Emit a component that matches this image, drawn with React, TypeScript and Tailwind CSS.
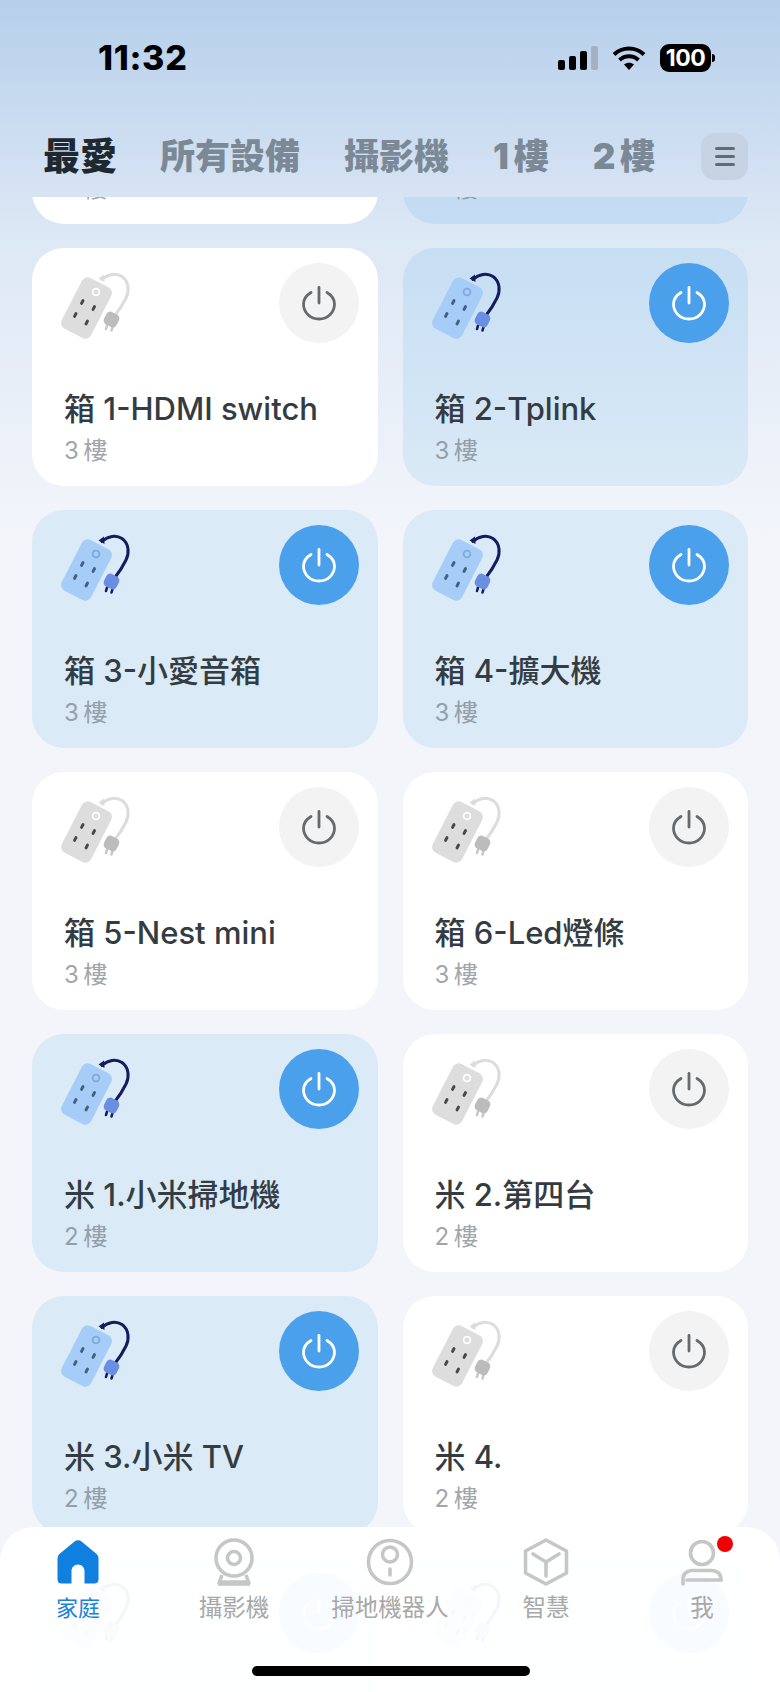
type Device = { name: string; floor: string; on: boolean };

const DEVICES: Device[] = [
  { name: "", floor: "3 樓", on: false },
  { name: "", floor: "3 樓", on: true },
  { name: "箱 1-HDMI switch", floor: "3 樓", on: false },
  { name: "箱 2-Tplink", floor: "3 樓", on: true },
  { name: "箱 3-小愛音箱", floor: "3 樓", on: true },
  { name: "箱 4-擴大機", floor: "3 樓", on: true },
  { name: "箱 5-Nest mini", floor: "3 樓", on: false },
  { name: "箱 6-Led燈條", floor: "3 樓", on: false },
  { name: "米 1.小米掃地機", floor: "2 樓", on: true },
  { name: "米 2.第四台", floor: "2 樓", on: false },
  { name: "米 3.小米 TV", floor: "2 樓", on: true },
  { name: "米 4.", floor: "2 樓", on: false },
  { name: "", floor: "", on: true },
  { name: "", floor: "", on: true },
];

const TABS = ["所有設備", "攝影機", "1\u2009樓", "2\u2009樓"];

function StripIcon({ on }: { on: boolean }) {
  const body = on ? "#a5cdf8" : "#dddddd";
  const cable = on ? "#141c5e" : "#dcdcdc";
  const plug = on ? "#6a8fe2" : "#bcbcbc";
  const prong = on ? "#141c5e" : "#c8c8c8";
  const socket = on ? "#41607f" : "#474747";
  const ring = on ? "#7fa9d8" : "#ffffff";
  return (
    <svg width="72" height="70" viewBox="10 10 72 70" fill="none" className="shrink-0">
      <path d="M52 19.5C58 14 66 12.5 72 16.5C79 21.5 79.5 31 76 38C73 44 70 49 66 54" stroke={cable} strokeWidth="3" strokeLinecap="round" />
      <path d="M48.5 18.5L54 14.5L54.5 22Z" fill={cable} />
      <rect x="20" y="19.5" width="33" height="57" rx="6.5" transform="rotate(27 36.5 48)" fill={body} />
      <circle cx="46" cy="32" r="3.4" stroke={ring} strokeWidth="1.8" fill={on ? "none" : "#dddddd"} />
      <g stroke={socket} strokeWidth="2.8" strokeLinecap="round">
        <path d="M31.5 43.5L33 40.5" />
        <path d="M43 49.5L44.5 46.5" />
        <path d="M24.5 56.5L26 53.5" />
        <path d="M36 64L37.5 61" />
      </g>
      <g stroke={prong} strokeWidth="2.6" strokeLinecap="round">
        <path d="M57 65.5L56 69" />
        <path d="M62.5 67L61.5 70.5" />
      </g>
      <rect x="54.5" y="52.5" width="14" height="14" rx="4.5" transform="rotate(27 61.5 59.5)" fill={plug} />
    </svg>
  );
}

function PowerIcon({ on }: { on: boolean }) {
  return (
    <svg width="36" height="36" viewBox="0 0 36 36" fill="none" stroke={on ? "#ffffff" : "#666a6d"} strokeWidth="2.8" strokeLinecap="round">
      <path d="M18 2.5V18" />
      <path d="M10 7.5C5.5 10.2 2.5 14.6 2.5 19C2.5 27.6 9.4 34 18 34C26.6 34 33.5 27.6 33.5 19C33.5 14.6 30.5 10.2 26 7.5" />
    </svg>
  );
}

function DeviceCard({ device }: { device: Device }) {
  return (
    <div
      className={
        device.on
          ? "flex h-[238px] flex-col rounded-[32px] bg-linear-to-b from-[#c3dcf3] from-[12%] to-[#daeaf6] to-[29%] bg-fixed"
          : "flex h-[238px] flex-col rounded-[32px] bg-white"
      }
    >
      <div className="flex items-start justify-between pt-[15px] pr-[19px] pl-[28px]">
        <div className="mt-[7px]">
          <StripIcon on={device.on} />
        </div>
        <div
          className={
            device.on
              ? "flex h-[80px] w-[80px] items-center justify-center rounded-full bg-[#4ba0ec]"
              : "flex h-[80px] w-[80px] items-center justify-center rounded-full bg-[#f3f3f3]"
          }
        >
          <PowerIcon on={device.on} />
        </div>
      </div>
      <div className="mt-auto pb-[19px] pl-[32px]">
        <div className="min-h-[40px] text-[31px] leading-[40px] font-medium text-[#343c43]">{device.name}</div>
        <div
          className={
            device.on
              ? "mt-[6px] text-[24px] leading-[32px] [word-spacing:-2px] text-[#939fa9]"
              : "mt-[6px] text-[24px] leading-[32px] [word-spacing:-2px] text-[#a2a6aa]"
          }
        >
          {device.floor}
        </div>
      </div>
    </div>
  );
}

function StatusIcons() {
  return (
    <div className="flex items-center">
      <div className="flex items-end gap-[4px]">
        <span className="h-[10px] w-[7px] rounded-[2px] bg-black" />
        <span className="h-[14px] w-[7px] rounded-[2px] bg-black" />
        <span className="h-[19px] w-[7px] rounded-[2px] bg-black" />
        <span className="h-[24px] w-[7px] rounded-[2px] bg-[#a3b1c2]" />
      </div>
      <svg width="34" height="24" viewBox="0 0 34 24" className="ml-[14px]" fill="none" stroke="#000" strokeWidth="4">
        <path d="M2 8.5C10.5 0.5 23.5 0.5 32 8.5" />
        <path d="M7.5 14C13 9 21 9 26.5 14" />
        <path d="M12 18.5L17 24L22 18.5C19 16 15 16 12 18.5Z" fill="#000" stroke="none" />
      </svg>
      <div className="ml-[14px] flex items-center">
        <div className="flex h-[28px] w-[51px] items-center justify-center rounded-[9px] bg-black text-[23px] leading-none font-bold tracking-[-0.5px] text-white">
          100
        </div>
        <span className="ml-[1px] h-[8px] w-[3px] rounded-r-full bg-black" />
      </div>
    </div>
  );
}

function HomeIcon() {
  return (
    <svg width="42" height="44" viewBox="0 0 42 44">
      <path
        fillRule="evenodd"
        d="M17.5 1.5C19.5 -0.2 22.5 -0.2 24.5 1.5L39 13.5C40.6 14.8 41.5 16.6 41.5 18.6V39.5C41.5 42 39.8 43.5 37.5 43.5H27.5V31C27.5 27.4 24.6 24.5 21 24.5C17.4 24.5 14.5 27.4 14.5 31V43.5H4.5C2.2 43.5 0.5 42 0.5 39.5V18.6C0.5 16.6 1.4 14.8 3 13.5Z"
        fill="#0f80e0"
      />
    </svg>
  );
}

function CameraIcon() {
  return (
    <svg width="42" height="48" viewBox="0 0 42 48" fill="none" stroke="#c6c6c6" strokeWidth="3.6">
      <circle cx="21" cy="20" r="18" />
      <circle cx="21" cy="20" r="6.5" />
      <path d="M9 37L6.5 44H35.5L33 37" />
      <path d="M5 46H37" />
    </svg>
  );
}

function RobotIcon() {
  return (
    <svg width="48" height="48" viewBox="0 0 48 48" fill="none" stroke="#c6c6c6" strokeWidth="3.6" strokeLinecap="round">
      <circle cx="24" cy="24" r="21.5" />
      <circle cx="24" cy="16.5" r="7.5" />
      <path d="M24 31V37" />
    </svg>
  );
}

function CubeIcon() {
  return (
    <svg width="46" height="48" viewBox="0 0 46 48" fill="none" stroke="#c6c6c6" strokeWidth="3.6" strokeLinejoin="round" strokeLinecap="round">
      <path d="M23 2L43.5 13V35L23 46L2.5 35V13Z" />
      <path d="M10 16L23 24L36 16" />
      <path d="M23 24V38" />
    </svg>
  );
}

function UserIcon() {
  return (
    <svg width="42" height="48" viewBox="0 0 42 48" fill="none" stroke="#c6c6c6" strokeWidth="3.6" strokeLinecap="round">
      <circle cx="21" cy="15" r="11.5" />
      <path d="M2 46V41C2 36 6 32.5 11 32.5H31C36 32.5 40 36 40 41V42H6" />
    </svg>
  );
}

export default function App() {
  return (
    <div className="relative flex h-[1692px] w-[780px] flex-col overflow-hidden bg-linear-to-b from-[#b6cfeb] via-[#dde8f5] via-[14%] to-[#f3f5fb] to-[32%] font-['Inter','Noto_Sans_CJK_TC',sans-serif]">
      {/* Status bar + tabs */}
      <div className="relative z-10 h-[197px] shrink-0 pt-[44px]">
        <div className="flex h-[28px] items-center justify-between pr-[65px] pl-[98px]">
          <span className="text-[34px] leading-none font-extrabold tracking-[0.7px] text-black">11:32</span>
          <StatusIcons />
        </div>
        <div className="mt-[61px] flex h-[47px] items-center pr-[32px] pl-[43px]">
          <span className="mr-[43px] text-[37px] leading-none font-black text-[#1f282f]">最愛</span>
          <div className="flex gap-[44px] text-[35px] leading-none font-black text-[#7b8996]">
            {TABS.map((t) => (
              <span key={t}>{t}</span>
            ))}
          </div>
          <div className="ml-auto flex h-[47px] w-[47px] flex-col items-center justify-center gap-[5px] rounded-[14px] bg-[#c5d3e3]">
            <span className="h-[3px] w-[20px] rounded-full bg-[#5f6c78]" />
            <span className="h-[3px] w-[20px] rounded-full bg-[#5f6c78]" />
            <span className="h-[3px] w-[20px] rounded-full bg-[#5f6c78]" />
          </div>
        </div>
      </div>

      {/* Device list, scrolled */}
      <div className="flex-1 overflow-hidden">
        <div className="-mt-[211px] grid grid-cols-2 gap-x-[25px] gap-y-[24px] px-[32px]">
          {DEVICES.map((d, i) => (
            <DeviceCard key={i} device={d} />
          ))}
        </div>
      </div>

      {/* Bottom tab bar */}
      <div className="absolute right-0 bottom-0 left-0 h-[165px] rounded-t-[34px] bg-white/[0.96] pt-[11px]">
        <div className="grid grid-cols-5">
          <div className="flex flex-col items-center">
            <div className="flex h-[48px] items-center">
              <HomeIcon />
            </div>
            <span className="mt-[7px] text-[22px] leading-[30px] text-[#1a82dc]">家庭</span>
          </div>
          <div className="flex flex-col items-center">
            <div className="flex h-[48px] items-center">
              <CameraIcon />
            </div>
            <span className="mt-[7px] text-[23.5px] leading-[30px] text-[#a8a8a8]">攝影機</span>
          </div>
          <div className="flex flex-col items-center">
            <div className="flex h-[48px] items-center">
              <RobotIcon />
            </div>
            <span className="mt-[7px] text-[23.5px] leading-[30px] text-[#a8a8a8]">掃地機器人</span>
          </div>
          <div className="flex flex-col items-center">
            <div className="flex h-[48px] items-center">
              <CubeIcon />
            </div>
            <span className="mt-[7px] text-[23.5px] leading-[30px] text-[#a8a8a8]">智慧</span>
          </div>
          <div className="flex flex-col items-center">
            <div className="relative flex h-[48px] items-center">
              <UserIcon />
              <span className="absolute -top-[2px] -right-[10px] h-[16px] w-[16px] rounded-full bg-[#f00000]" />
            </div>
            <span className="mt-[7px] text-[23.5px] leading-[30px] text-[#a8a8a8]">我</span>
          </div>
        </div>
        <div className="absolute bottom-[16px] left-[252px] h-[10px] w-[278px] rounded-full bg-black" />
      </div>
    </div>
  );
}
